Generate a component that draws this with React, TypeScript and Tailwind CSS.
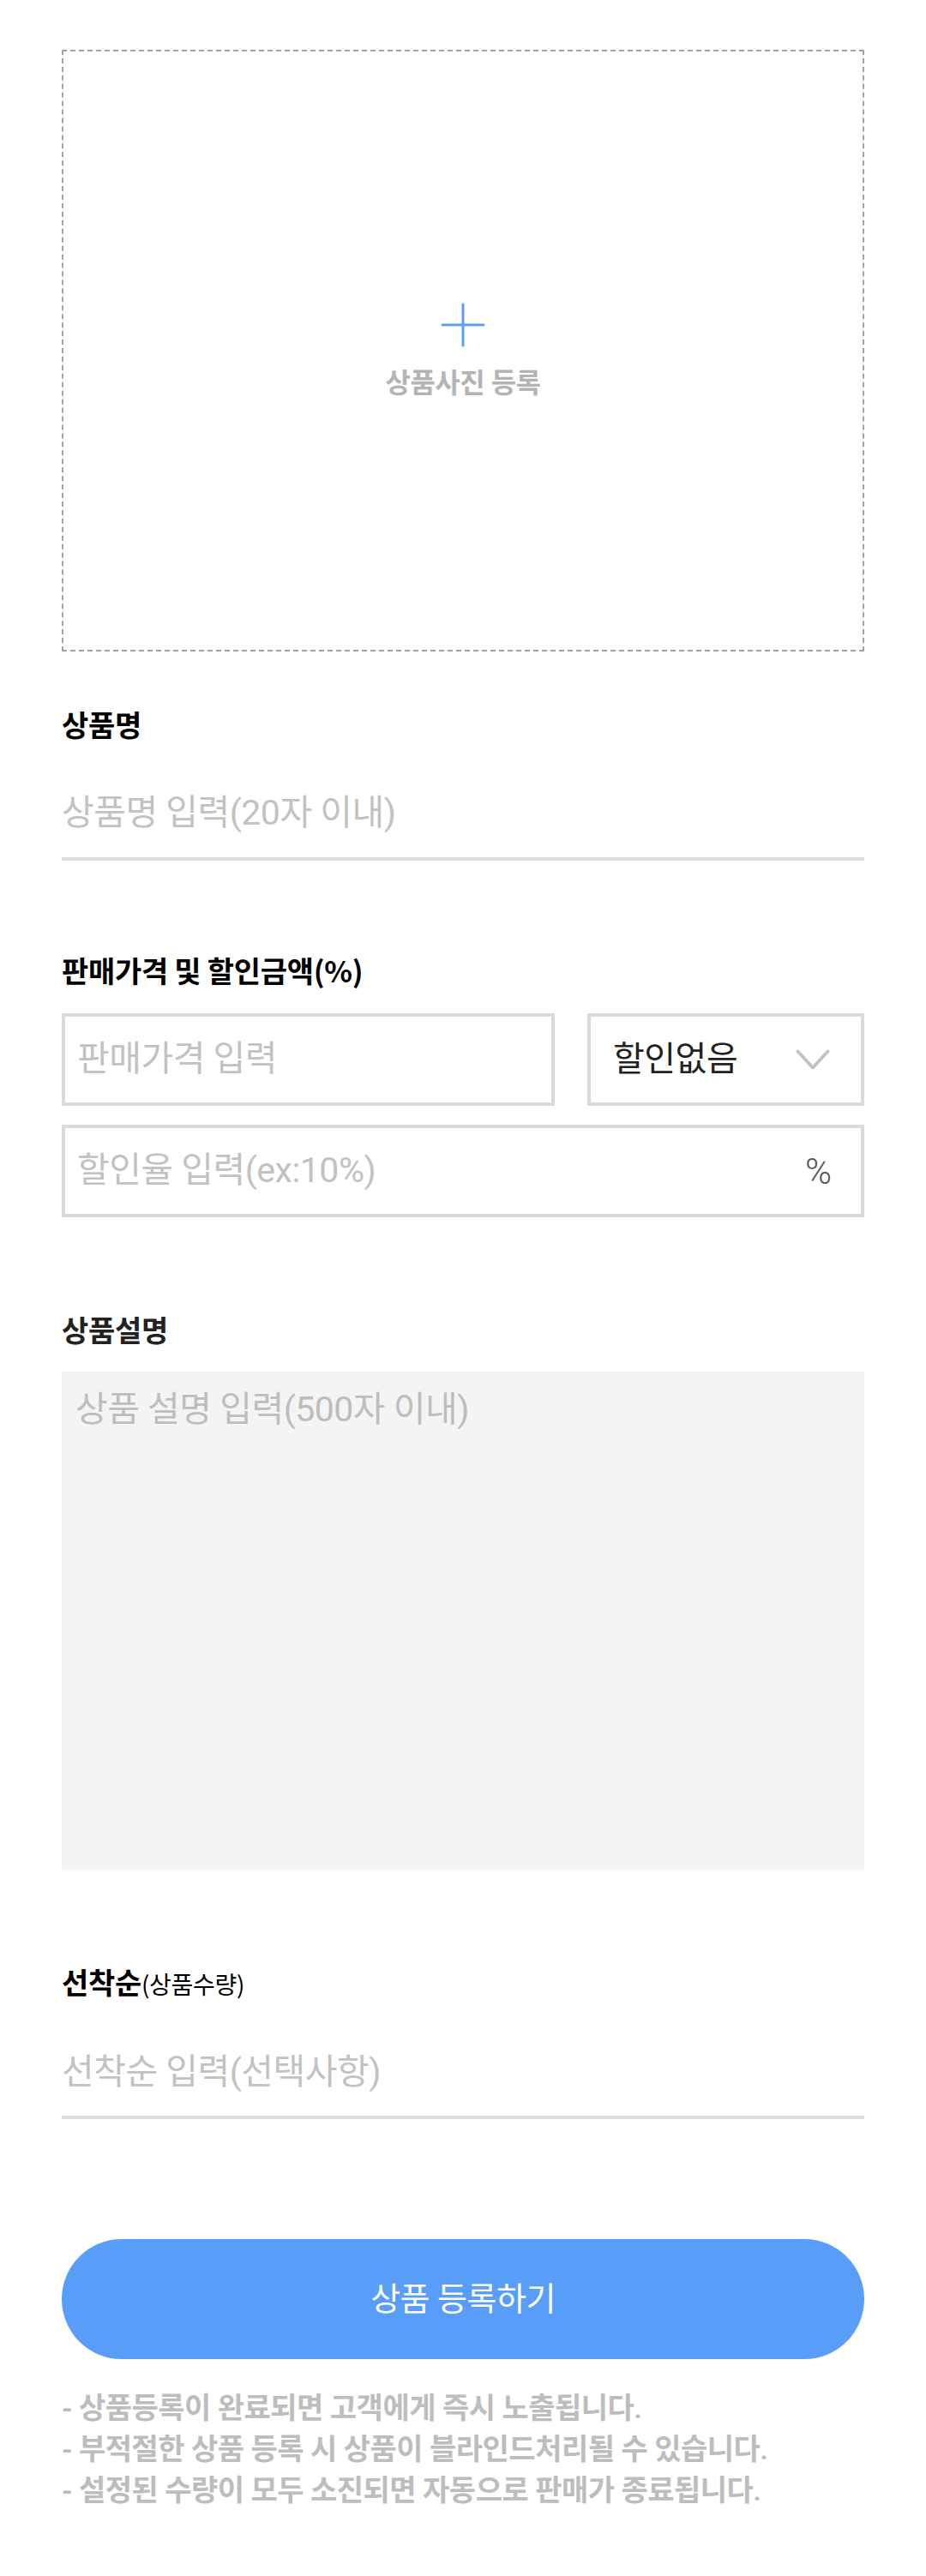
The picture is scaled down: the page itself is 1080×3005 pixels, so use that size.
import React, { useState } from 'react';

const FONT = "font-['Roboto','Noto_Sans_CJK_KR',sans-serif]";

const Label = ({ children, className = '' }: { children: React.ReactNode; className?: string }) => (
  <h2 className={`font-['Noto_Sans_CJK_KR',sans-serif] text-[34px] leading-[36px] font-bold tracking-[-0.3px] ${className}`}>{children}</h2>
);

const App: React.FC = () => {
  const [name, setName] = useState('');
  const [price, setPrice] = useState('');
  const [rate, setRate] = useState('');
  const [desc, setDesc] = useState('');
  const [qty, setQty] = useState('');

  return (
    <div className={`min-h-screen bg-white text-black ${FONT}`}>
      <div className="px-[72px] pt-[58px] pb-[78px]">
        {/* Photo upload */}
        <button className="w-full h-[702px] border-2 border-dashed border-[#a3a3a3] flex flex-col items-center justify-center gap-[24px]">
          <svg width="52" height="52" viewBox="0 0 52 52" fill="none">
            <path d="M26 2v48M2 26h48" stroke="#5a9ef8" strokeWidth="3" strokeLinecap="round" />
          </svg>
          <span className="text-[32px] leading-[36px] font-semibold text-[#b4b4b4] tracking-[-0.5px]">상품사진 등록</span>
        </button>

        {/* Product name */}
        <Label className="mt-[67px]">상품명</Label>
        <div className="mt-[49px] pb-[16px] border-b-4 border-[#dcdcdc]">
          <input
            value={name}
            onChange={e => setName(e.target.value)}
            placeholder="상품명 입력(20자 이내)"
            className="w-full h-[72px] text-[41px] tracking-[-0.5px] outline-none placeholder:text-[#c2c2c2] bg-transparent"
          />
        </div>

        {/* Price */}
        <Label className="mt-[110px]">판매가격 및 할인금액(%)</Label>
        <div className="mt-[32px] flex gap-[38px]">
          <div className="flex-1 h-[108px] border-4 border-[#dadada] flex items-center pl-[14px]">
            <input
              value={price}
              onChange={e => setPrice(e.target.value)}
              placeholder="판매가격 입력"
              className="w-full text-[41px] tracking-[-0.5px] outline-none placeholder:text-[#c2c2c2] bg-transparent"
            />
          </div>
          <div className="w-[323px] h-[108px] border-4 border-[#dadada] flex items-center justify-between pl-[26px] pr-[36px]">
            <span className="text-[40px] text-[#222] tracking-[-0.5px]">할인없음</span>
            <svg width="40" height="24" viewBox="0 0 40 24" fill="none">
              <path d="M2.5 2.5l17.5 19L37.5 2.5" stroke="#c2c2c2" strokeWidth="4" strokeLinecap="round" strokeLinejoin="round" />
            </svg>
          </div>
        </div>
        <div className="mt-[22px] h-[108px] border-4 border-[#dadada] flex items-center pl-[14px] pr-[34px]">
          <input
            value={rate}
            onChange={e => setRate(e.target.value)}
            placeholder="할인율 입력(ex:10%)"
            className="flex-1 text-[41px] tracking-[-0.5px] outline-none placeholder:text-[#c2c2c2] bg-transparent"
          />
          <span className="text-[42px] font-light text-[#555]">%</span>
        </div>

        {/* Description */}
        <Label className="mt-[113px] text-[#222]">상품설명</Label>
        <textarea
          value={desc}
          onChange={e => setDesc(e.target.value)}
          placeholder="상품 설명 입력(500자 이내)"
          className="mt-[31px] block w-full h-[581px] resize-none bg-[#f4f4f4] px-[16px] pt-[18px] text-[41px] leading-[52px] tracking-[-0.5px] outline-none placeholder:text-[#bdbdbd]"
        />

        {/* Quantity */}
        <Label className="mt-[113px]">
          선착순<span className="text-[28px] font-normal">(상품수량)</span>
        </Label>
        <div className="mt-[49px] pb-[15px] border-b-4 border-[#dcdcdc]">
          <input
            value={qty}
            onChange={e => setQty(e.target.value)}
            placeholder="선착순 입력(선택사항)"
            className="w-full h-[72px] text-[41px] tracking-[-0.5px] outline-none placeholder:text-[#c2c2c2] bg-transparent"
          />
        </div>

        {/* Submit */}
        <button className="mt-[140px] w-full h-[140px] rounded-full bg-[#589ef9] text-white text-[38px] tracking-[-0.5px]">
          상품 등록하기
        </button>

        <ul className="mt-[33px] text-[34px] leading-[48px] font-semibold text-[#bdbdbd] tracking-[-0.5px]">
          <li>- 상품등록이 완료되면 고객에게 즉시 노출됩니다.</li>
          <li>- 부적절한 상품 등록 시 상품이 블라인드처리될 수 있습니다.</li>
          <li>- 설정된 수량이 모두 소진되면 자동으로 판매가 종료됩니다.</li>
        </ul>
      </div>
    </div>
  );
};

export default App;
